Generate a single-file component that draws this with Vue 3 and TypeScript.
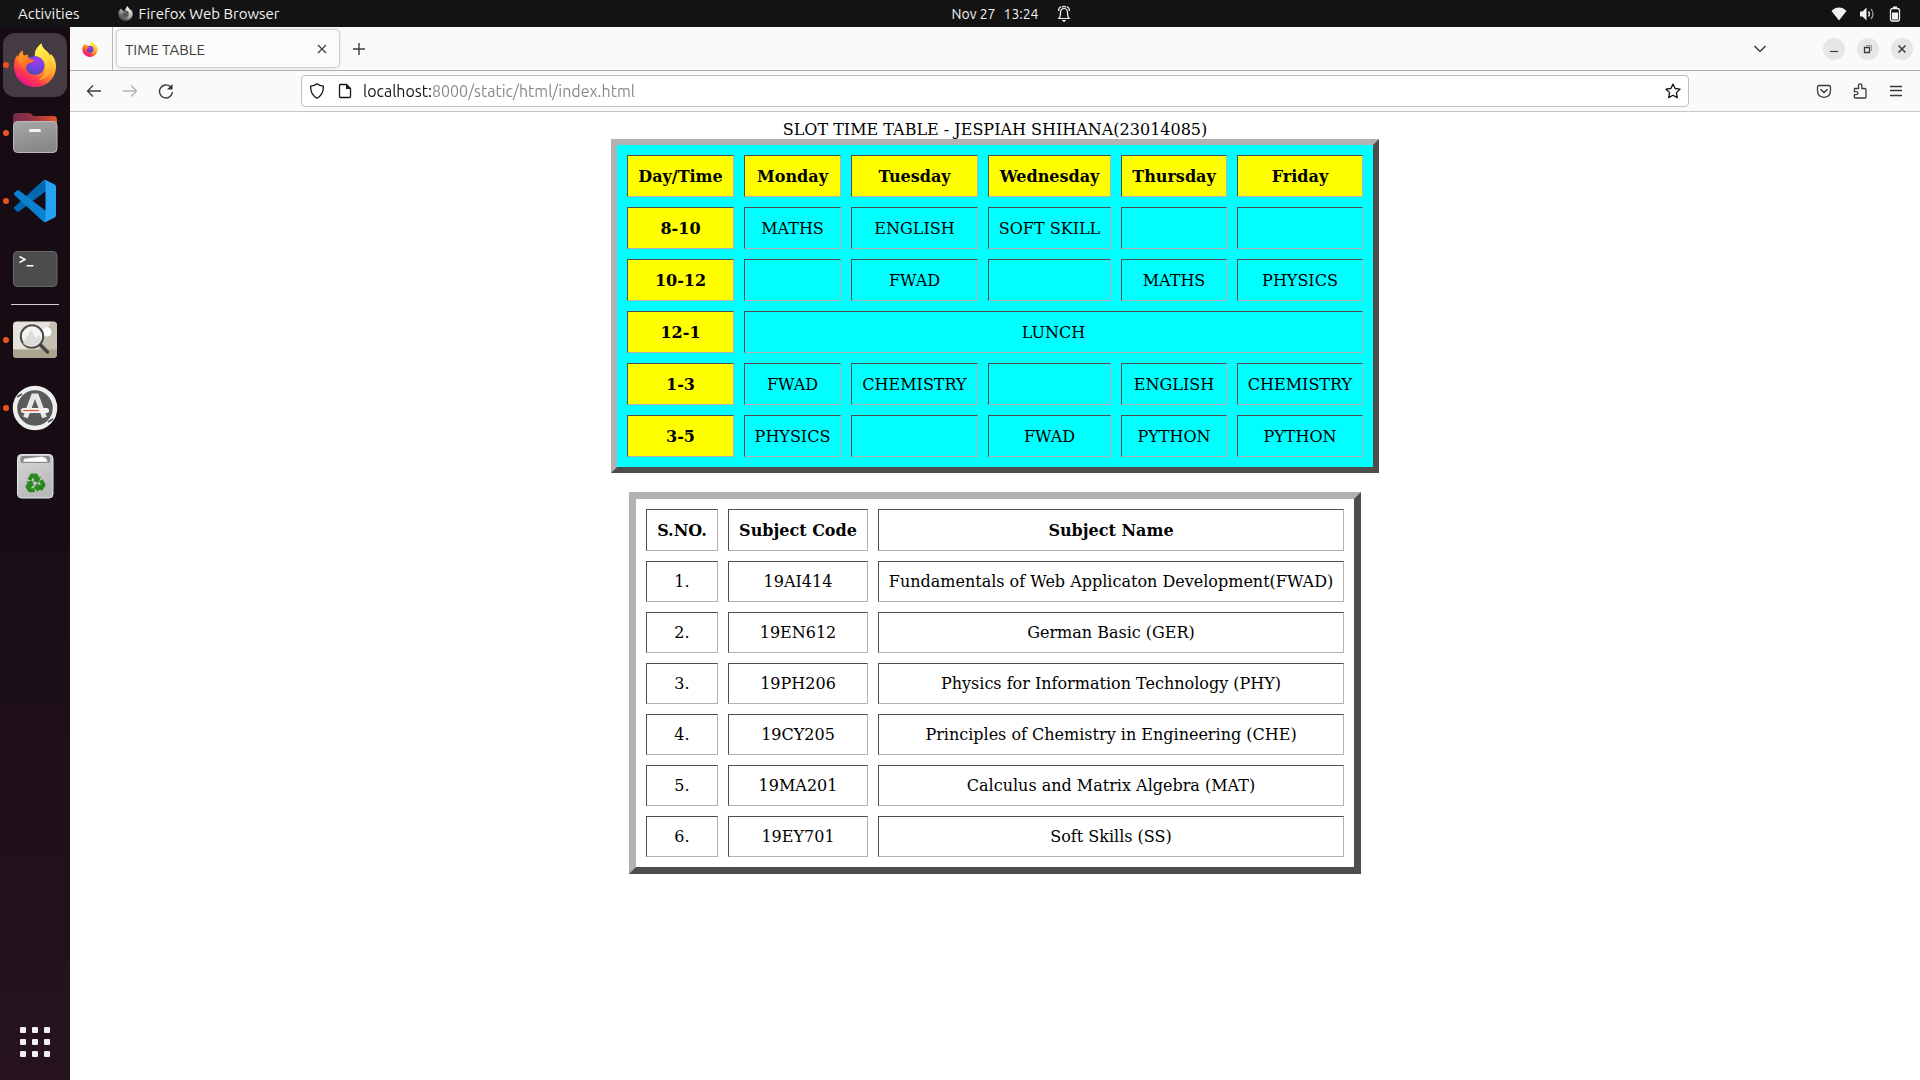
<script setup lang="ts">
import { ref } from 'vue'

interface Slot {
  text: string
  span?: number
}

interface Period {
  time: string
  slots: Slot[]
}

interface Subject {
  code: string
  name: string
}

const url = ref('localhost:8000/static/html/index.html')

const days: string[] = ['Monday', 'Tuesday', 'Wednesday', 'Thursday', 'Friday']

const week = (...names: string[]): Slot[] => names.map((text) => ({ text }))

const periods: Period[] = [
  { time: '8-10', slots: week('MATHS', 'ENGLISH', 'SOFT SKILL', '', '') },
  { time: '10-12', slots: week('', 'FWAD', '', 'MATHS', 'PHYSICS') },
  { time: '12-1', slots: [{ text: 'LUNCH', span: 5 }] },
  { time: '1-3', slots: week('FWAD', 'CHEMISTRY', '', 'ENGLISH', 'CHEMISTRY') },
  { time: '3-5', slots: week('PHYSICS', '', 'FWAD', 'PYTHON', 'PYTHON') },
]

const subjects: Subject[] = [
  { code: '19AI414', name: 'Fundamentals of Web Applicaton Development(FWAD)' },
  { code: '19EN612', name: 'German Basic (GER)' },
  { code: '19PH206', name: 'Physics for Information Technology (PHY)' },
  { code: '19CY205', name: 'Principles of Chemistry in Engineering (CHE)' },
  { code: '19MA201', name: 'Calculus and Matrix Algebra (MAT)' },
  { code: '19EY701', name: 'Soft Skills (SS)' },
]

const gridDots: number[] = [0, 12, 24]
</script>

<template>
  <div class="desktop">
    <svg class="sprite" aria-hidden="true">
      <defs>
        <linearGradient id="fx-body" x1="0.8" y1="0.1" x2="0.25" y2="0.95">
          <stop offset="0" stop-color="#fff44f" />
          <stop offset="0.3" stop-color="#ffc130" />
          <stop offset="0.55" stop-color="#ff8128" />
          <stop offset="0.78" stop-color="#ff3750" />
          <stop offset="1" stop-color="#e8128a" />
        </linearGradient>
        <linearGradient id="fx-tail" x1="0.4" y1="0" x2="0.7" y2="1">
          <stop offset="0" stop-color="#fff450" />
          <stop offset="0.5" stop-color="#ffd83a" />
          <stop offset="1" stop-color="#ff9230" />
        </linearGradient>
        <linearGradient id="fx-head" x1="0" y1="0" x2="0.4" y2="1">
          <stop offset="0" stop-color="#ffa21f" />
          <stop offset="0.5" stop-color="#ff8a1c" />
          <stop offset="1" stop-color="#ff4040" />
        </linearGradient>
        <radialGradient id="fx-globe" cx="0.6" cy="0.25" r="0.8">
          <stop offset="0" stop-color="#a43bf0" />
          <stop offset="0.5" stop-color="#7542e5" />
          <stop offset="1" stop-color="#4a4bb5" />
        </radialGradient>
        <symbol id="firefox" viewBox="0 0 42 44">
          <path fill="url(#fx-body)" d="M27.500.5C28 4 30 6 33 8.500C34.500 10 35.200 11.600 35.500 13.500L37 11C40.500 14.500 42 19 42 23C42 35 33 44 21 44S0 35 0 23C0 19 1 15 3 12L4 14.500C5 11 6.500 9 8.500 7.500C8.300 10 9 12 10 12.800L14 11.500L13.500 14.500L21 15C20 8 23 4 27.500.5Z" />
          <path fill="url(#fx-tail)" d="M27.500.5C28 4 30 6 33 8.500C37 12.500 39 17 38.500 23C38 31 32 36.500 25 37C31 33 33 26 30.500 20C28.500 16.500 24 16.500 21 14C20.500 8 23 4 27.500.5Z" />
          <circle cx="21" cy="22.500" r="9.500" fill="url(#fx-globe)" />
          <path fill="url(#fx-head)" d="M3 12L4 14.500C5 11 6.500 9 8.500 7.500C8.300 10 9 12 10 12.800L14 11.500L13.500 14.800C15 16.500 18 16.500 20.500 17.300C19 20 15.500 20 14 21C11.500 23 12 27 14 29.500C9 28 5 23 3 12Z" />
        </symbol>
      </defs>
    </svg>

    <header class="topbar">
      <div class="top-left">
        <button class="plain" type="button">Activities</button>
        <button class="plain app-menu" type="button">
          <svg class="gray-fox" width="15" height="15"><use href="#firefox" /></svg>
          <span>Firefox Web Browser</span>
        </button>
      </div>
      <button class="plain clock" type="button">
        <span>Nov 27</span>
        <span>13:24</span>
        <svg class="bell" width="14" height="18" viewBox="0 0 14 18" fill="none" stroke="#f2f2f2">
          <path d="M2 13.500C3.500 12 3.500 10 3.500 7.500C3.500 5 5 3.500 7 3.500S10.500 5 10.500 7.500C10.500 10 10.500 12 12 13.500ZM4 1.500C2.500 2.300 1.500 4 1.500 6M10 1.500C11.500 2.300 12.500 4 12.500 6M5 2.500C5.500 1 8.500 1 9 2.500" stroke-width="1.200" />
          <path d="M5.500 15.500H8.500L7 16.500Z" fill="#f2f2f2" />
        </svg>
      </button>
      <button class="plain status" type="button" aria-label="System menu">
        <svg width="16" height="16" viewBox="0 0 16 16"><path fill="#f2f2f2" d="M.5 4.500C5-.1 11-.1 15.500 4.500L8 14Z" transform="translate(0 .5)" /></svg>
        <svg width="16" height="16" viewBox="0 0 16 16" fill="none" stroke="#f2f2f2">
          <path fill="#f2f2f2" stroke="none" d="M1 5.500H3.500L7.500 1.500V14.500L3.500 10.500H1Z" />
          <path d="M9.500 5.500Q11.500 8 9.500 10.500" stroke-width="1.300" />
          <path d="M12 3Q16 8 12 13" stroke="#aaa" stroke-width="1.200" />
        </svg>
        <svg width="16" height="16" viewBox="0 0 16 16">
          <rect x="3.500" y="2.500" width="9" height="12.500" rx="2" fill="none" stroke="#f2f2f2" stroke-width="1.300" />
          <path fill="#f2f2f2" d="M6 .5H10V2H6ZM5 6.500H11V13.500H5Z" />
        </svg>
      </button>
    </header>

    <nav class="dock" aria-label="Dock">
      <button class="plain dock-item running" type="button" aria-label="Firefox">
        <span class="tile active"><svg width="42" height="44"><use href="#firefox" /></svg></span>
      </button>
      <button class="plain dock-item running" type="button" aria-label="Files">
        <svg width="48" height="48" viewBox="0 0 48 48">
          <defs>
            <linearGradient id="folder-back"><stop offset="0" stop-color="#74294f" /><stop offset="0.500" stop-color="#9b3443" /><stop offset="1" stop-color="#e95420" /></linearGradient>
            <linearGradient id="folder-front" x2="0.300" y2="1"><stop offset="0" stop-color="#a6a6a6" /><stop offset="1" stop-color="#888" /></linearGradient>
          </defs>
          <path fill="url(#folder-back)" d="M2 8Q2 4 6 4H18Q20 4 21 5.500Q22 7 24 7H42Q46 7 46 11V24H2Z" />
          <rect x="2.500" y="12.500" width="43.500" height="31" rx="4" fill="url(#folder-front)" stroke="#b9b9b9" />
          <rect x="18" y="20" width="12" height="3" rx="1.500" fill="#f4f4f4" />
        </svg>
      </button>
      <button class="plain dock-item running" type="button" aria-label="Visual Studio Code">
        <svg width="42" height="42" viewBox="0 0 100 100">
          <path fill="#0069b0" d="M96.461 10.796L75.857.876C73.472-.273 70.622.212 68.750 2.083L1.299 63.583C-.516 65.237-.514 68.094 1.303 69.745L6.813 74.754C8.298 76.104 10.535 76.204 12.134 74.991L93.361 13.370C96.086 11.303 100 13.246 100 16.667V16.428C100 14.027 98.625 11.838 96.461 10.796Z" />
          <path fill="#0a80cf" d="M96.461 89.204L75.857 99.125C73.472 100.273 70.622 99.788 68.750 97.917L1.299 36.417C-.516 34.763-.514 31.906 1.303 30.255L6.813 25.246C8.298 23.896 10.535 23.796 12.134 25.010L93.361 86.630C96.086 88.697 100 86.754 100 83.333V83.573C100 85.974 98.625 88.162 96.461 89.204Z" />
          <path fill="#25a2f2" d="M75.858 99.126C73.472 100.274 70.622 99.789 68.750 97.917C71.056 100.223 75 98.590 75 95.328V4.672C75 1.410 71.056-.223 68.750 2.083C70.622.211 73.472-.274 75.858.874L96.459 10.781C98.623 11.822 100 14.011 100 16.413V83.587C100 85.989 98.623 88.179 96.459 89.220Z" />
        </svg>
      </button>
      <button class="plain dock-item" type="button" aria-label="Terminal">
        <svg width="48" height="48" viewBox="0 0 48 48" fill="none">
          <rect x="2.500" y="6.500" width="43.500" height="35" rx="4" fill="#4c4c4c" stroke="#696969" />
          <path d="M8.500 11.500L14 14.500L8.500 17.500M15.500 20.800H22.500" stroke="#fff" stroke-width="1.500" />
        </svg>
      </button>
      <hr class="dock-rule" />
      <button class="plain dock-item running" type="button" aria-label="Image Viewer">
        <svg width="48" height="48" viewBox="0 0 48 48">
          <rect x="2" y="5.500" width="44" height="36.500" rx="4" fill="#e6e4da" />
          <path fill="#c5c1b2" d="M27 34L40 6H42Q46 6 46 10V34Z" />
          <path fill="#a9a58f" d="M2 33.500H46V38Q46 42 42 42H6Q2 42 2 38Z" />
          <circle cx="36" cy="16" r="4.500" fill="#fff" />
          <circle cx="21" cy="20.500" r="11.200" fill="#f3f3f1" stroke="#4b4b4b" stroke-width="2" />
          <path fill="#dcdcd8" d="M12 27L20 14L25 22L28 19L30 23Q27 30 21 30.500Q15 31 12 27Z" />
          <path d="M29.500 29L36.500 36" stroke="#444" stroke-width="3.500" stroke-linecap="round" />
        </svg>
      </button>
      <button class="plain dock-item running" type="button" aria-label="Software Updater">
        <svg width="48" height="48" viewBox="0 0 48 48" fill="none">
          <circle cx="24" cy="24" r="20" fill="#5b5b5b" stroke="#eee" stroke-width="4.500" />
          <path d="M6 13L11 10M37 38L42 35" stroke="#5b5b5b" stroke-width="2" />
          <path d="M14.500 33.500L22.500 12H25.500L33.500 33.500" stroke="#e8e8e8" stroke-width="5" />
          <rect x="10" y="24" width="28" height="5" rx="2.500" fill="#f2f2f2" />
          <path d="M12 26.500H28" stroke="#e95420" stroke-width="1.200" />
        </svg>
      </button>
      <button class="plain dock-item" type="button" aria-label="Trash">
        <svg width="48" height="48" viewBox="0 0 48 48">
          <defs>
            <linearGradient id="bin" x2="0.500" y2="1"><stop offset="0" stop-color="#d6d6d6" /><stop offset="1" stop-color="#b9b9b9" /></linearGradient>
            <path id="recycle-arm" d="M21 21.500H26L28.300 25.500L30 24.500L27.800 30.500L21.800 29.300L23.500 28.300L22 25.600L20 29L16.600 27L19 22.800Q19.700 21.500 21 21.500Z" />
          </defs>
          <rect x="6.500" y="2.500" width="35.500" height="43.500" rx="4" fill="url(#bin)" stroke="#e4e4e4" />
          <rect x="9.500" y="4" width="29.500" height="7" rx="2" fill="#858585" />
          <path fill="#fff" stroke="#999" stroke-width=".5" d="M12 10L13 6.500L31 4.500L35 6L37 10Z" />
          <g fill="#288a1e">
            <use href="#recycle-arm" />
            <use href="#recycle-arm" transform="rotate(120 24 31.500)" />
            <use href="#recycle-arm" transform="rotate(240 24 31.500)" />
          </g>
        </svg>
      </button>
      <button class="plain apps" type="button" aria-label="Show Applications">
        <svg width="30" height="30" viewBox="0 0 30 30" fill="#f2f0f1">
          <template v-for="y in gridDots" :key="y">
            <rect v-for="x in gridDots" :key="x" :x="x" :y="y" width="6" height="6" rx="1" />
          </template>
        </svg>
      </button>
    </nav>

    <section class="browser">
      <div class="tabs">
        <button class="plain pinned" type="button" aria-label="Firefox View">
          <svg width="16" height="16"><use href="#firefox" /></svg>
        </button>
        <div class="tab">
          <span class="tab-title">TIME TABLE</span>
          <button class="plain icon" type="button" aria-label="Close tab">
            <svg width="16" height="16" viewBox="0 0 16 16" class="line"><path d="M4 4L12 12M12 4L4 12" /></svg>
          </button>
        </div>
        <button class="plain icon new-tab" type="button" aria-label="New tab">
          <svg width="16" height="16" viewBox="0 0 16 16" class="line"><path d="M8 2V14M2 8H14" stroke-width="1.400" /></svg>
        </button>
        <button class="plain icon all-tabs" type="button" aria-label="List all tabs">
          <svg width="16" height="16" viewBox="0 0 16 16" class="line"><path d="M2.500 5L8 10.500L13.500 5" stroke-width="1.500" /></svg>
        </button>
        <div class="window-buttons">
          <button class="plain round" type="button" aria-label="Minimize">
            <svg width="16" height="16" viewBox="0 0 16 16" class="line"><path d="M4 10.500H12" /></svg>
          </button>
          <button class="plain round" type="button" aria-label="Restore">
            <svg width="16" height="16" viewBox="0 0 16 16" class="line"><path d="M4.500 6.500H9.500V11.500H4.500Z" stroke-width="1.300" /><path d="M6 4.500H11.500V10" stroke="#999" stroke-width="1" /></svg>
          </button>
          <button class="plain round" type="button" aria-label="Close">
            <svg width="16" height="16" viewBox="0 0 16 16" class="line"><path d="M4.500 4.500L11.500 11.500M11.500 4.500L4.500 11.500" stroke-width="1.500" /></svg>
          </button>
        </div>
      </div>

      <div class="toolbar">
        <div class="tool-group">
          <button class="plain icon" type="button" aria-label="Back">
            <svg width="16" height="16" viewBox="0 0 16 16" class="line"><path d="M15 8H1.500M7 2.500L1.500 8L7 13.500" stroke-width="1.300" /></svg>
          </button>
          <button class="plain icon" type="button" aria-label="Forward" disabled>
            <svg width="16" height="16" viewBox="0 0 16 16" class="line faint"><path d="M1 8H14.500M9 2.500L14.500 8L9 13.500" stroke-width="1.300" /></svg>
          </button>
          <button class="plain icon" type="button" aria-label="Reload">
            <svg width="16" height="16" viewBox="0 0 16 16" class="line"><path d="M14.500 9A6.500 6.500 0 1 1 12.500 3.700" stroke-width="1.400" /><path d="M14.500 1V6.500H9Z" fill="#333" stroke="none" /></svg>
          </button>
        </div>
        <div class="urlbar">
          <svg width="16" height="16" viewBox="0 0 16 16" class="line dark"><path d="M8 .8Q10.500 2.800 14.300 3.200Q14.800 11.500 8 15.300Q1.200 11.500 1.700 3.200Q5.500 2.800 8 .8Z" stroke-width="1.300" /></svg>
          <svg width="16" height="16" viewBox="0 0 16 16" class="line dark page-icon"><path d="M9.500 1.500H3.500Q2.500 1.500 2.500 2.500V13.500Q2.500 14.500 3.500 14.500H12.500Q13.500 14.500 13.500 13.500V5.500Z" stroke-width="1.300" /><path d="M9 1.500V6H13.500Z" fill="#15141a" stroke="none" /></svg>
          <input v-model="url" type="text" aria-label="Address" spellcheck="false" />
          <button class="plain icon" type="button" aria-label="Bookmark this page">
            <svg width="16" height="16" viewBox="0 0 16 16" class="line dark"><path d="M8 1.100L10.100 5.500L15 6.200L11.400 9.600L12.300 14.600L8 12.200L3.700 14.600L4.600 9.600L1 6.200L5.900 5.500Z" stroke-width="1.300" stroke-linejoin="round" /></svg>
          </button>
        </div>
        <div class="tool-group">
          <button class="plain icon" type="button" aria-label="Save to Pocket">
            <svg width="16" height="16" viewBox="0 0 16 16" class="line"><path d="M3 2.500H13Q14.500 2.500 14.500 4V7.500Q14.500 14 8 14.300Q1.500 14 1.500 7.500V4Q1.500 2.500 3 2.500Z" stroke-width="1.300" /><path d="M4.800 6.500L8 9.500L11.200 6.500" stroke-width="1.400" stroke-linecap="round" /></svg>
          </button>
          <button class="plain icon" type="button" aria-label="Extensions">
            <svg width="16" height="16" viewBox="0 0 16 16" class="line"><path d="M2.500 5.500H6.500V2.500Q6.500 .8 8.200 .8T9.800 2.500V5.500H12.500Q14 5.500 14 7V14Q14 15 13 15H3.500Q2.300 15 2.300 13.800V11.700H4Q6 11.700 6 10.200T4 8.700H2.300Z" stroke-width="1.300" stroke-linejoin="round" /></svg>
          </button>
          <button class="plain icon" type="button" aria-label="Open application menu">
            <svg width="16" height="16" viewBox="0 0 16 16" class="line"><path d="M2 3.500H14M2 7.500H14M2 12.500H14" stroke-width="1.400" /></svg>
          </button>
        </div>
      </div>

      <main class="page">
        <table class="schedule">
          <caption>SLOT TIME TABLE - JESPIAH SHIHANA(23014085)</caption>
          <colgroup>
            <col class="c-time" />
            <col class="c-mon" />
            <col class="c-tue" />
            <col class="c-wed" />
            <col class="c-thu" />
            <col class="c-fri" />
          </colgroup>
          <thead>
            <tr>
              <th scope="col">Day/Time</th>
              <th v-for="day in days" :key="day" scope="col">{{ day }}</th>
            </tr>
          </thead>
          <tbody>
            <tr v-for="period in periods" :key="period.time">
              <th scope="row">{{ period.time }}</th>
              <td v-for="(slot, i) in period.slots" :key="i" :colspan="slot.span">{{ slot.text }}</td>
            </tr>
          </tbody>
        </table>

        <table class="subjects">
          <colgroup>
            <col class="c-no" />
            <col class="c-code" />
            <col class="c-name" />
          </colgroup>
          <thead>
            <tr>
              <th scope="col">S.NO.</th>
              <th scope="col">Subject Code</th>
              <th scope="col">Subject Name</th>
            </tr>
          </thead>
          <tbody>
            <tr v-for="(subject, i) in subjects" :key="subject.code">
              <td>{{ i + 1 }}.</td>
              <td>{{ subject.code }}</td>
              <td>{{ subject.name }}</td>
            </tr>
          </tbody>
        </table>
      </main>
    </section>
  </div>
</template>

<style>
body {
  margin: 0;
}
</style>

<style scoped>
.desktop {
  display: grid;
  grid-template: 27px 1fr / 70px minmax(0, 1fr);
  min-height: 100vh;
  font-family: Ubuntu, "Noto Sans", sans-serif;
  font-size: 15px;
  background: #fff;
}

.sprite {
  position: absolute;
  width: 0;
  height: 0;
}

svg {
  display: block;
  flex: none;
}

.plain {
  display: flex;
  align-items: center;
  justify-content: center;
  margin: 0;
  padding: 0;
  border: 0;
  background: none;
  color: inherit;
  font: inherit;
}

/* Desktop top bar */
.topbar {
  grid-column: 1 / -1;
  display: grid;
  grid-template-columns: 1fr auto 1fr;
  align-items: center;
  background: #131313;
  color: #f2f2f2;
  line-height: 26px;
}

.top-left {
  display: flex;
  gap: 38px;
  padding-left: 18px;
}

.app-menu {
  gap: 6px;
}

.gray-fox {
  filter: grayscale(1);
}

.clock {
  gap: 8px;
  margin-left: 102px;
  font-size: 14px;
}

.bell {
  margin-left: 10px;
}

.status {
  justify-self: end;
  gap: 12px;
  padding-right: 17px;
}

/* Dock */
.dock {
  display: flex;
  flex-direction: column;
  padding: 4px 0 23px;
  background: linear-gradient(#170c14 40%, #26131f);
}

.dock-item {
  position: relative;
  height: 68px;
}

.tile {
  display: flex;
  align-items: center;
  justify-content: center;
  width: 64px;
  height: 64px;
  border-radius: 12px;
}

.tile.active {
  background: #453b42;
}

.running::before {
  content: "";
  position: absolute;
  left: 3px;
  top: 31px;
  width: 6px;
  height: 6px;
  border-radius: 50%;
  background: #e95420;
}

.dock-rule {
  width: 48px;
  height: 1px;
  margin: 1px auto;
  border: 0;
  background: #d0ced0;
}

.apps {
  margin-top: auto;
}

/* Browser chrome */
.browser {
  display: flex;
  flex-direction: column;
  min-width: 0;
}

.line {
  fill: none;
  stroke: #3c3c3c;
  stroke-width: 1.2px;
}

.dark {
  stroke: #15141a;
}

.faint {
  stroke: #b4b4b4;
}

.icon {
  width: 16px;
  height: 16px;
}

.tabs {
  display: flex;
  align-items: center;
  height: 43px;
  border-bottom: 1px solid #aeaeae;
  background: #fafafa;
}

.pinned {
  width: 43px;
  height: 43px;
  padding-right: 2px;
  border-right: 1px solid #b8b8b8;
}

.tab {
  display: flex;
  align-items: center;
  justify-content: space-between;
  box-sizing: border-box;
  width: 222px;
  height: 37px;
  margin-left: 4px;
  padding: 0 9px 0 8px;
  border-radius: 4px;
  background: #fbfbfb;
  box-shadow: 0 0 3px #888;
  color: #3c3c3c;
}

.tab-title {
  padding-top: 2px;
}

.new-tab {
  margin-left: 12px;
}

.all-tabs {
  margin-left: auto;
}

.window-buttons {
  display: flex;
  gap: 12px;
  margin: 0 7px 0 55px;
}

.round {
  width: 22px;
  height: 22px;
  border-radius: 50%;
  background: #e6e6e6;
}

.toolbar {
  display: flex;
  align-items: center;
  height: 40px;
  padding: 0 16px;
  border-bottom: 1px solid #c8c8c8;
  background: #fafafa;
}

.tool-group {
  display: flex;
  gap: 20px;
}

.urlbar {
  display: flex;
  flex: 1;
  align-items: center;
  box-sizing: border-box;
  height: 32px;
  margin: 0 127px;
  padding: 0 7px;
  border: 1px solid #bfbfbf;
  border-radius: 4px;
  background: #fff;
}

.page-icon {
  margin-left: 12px;
}

/* The host is darker than the port and path that follow it */
.urlbar input {
  flex: 1;
  min-width: 0;
  height: 24px;
  margin-left: 10px;
  padding: 0;
  border: 0;
  outline: 0;
  background: linear-gradient(90deg, #15141a 68px, #85858a 68px);
  background-clip: text;
  color: transparent;
  caret-color: #15141a;
  font: inherit;
  font-size: 16px;
}

/* Web page */
.page {
  padding: 8px;
  background: #fff;
  color: #000;
  font: 16px/19px "DejaVu Serif", serif;
}

table {
  margin: 0 auto;
  border-style: solid;
  border-color: #b2b2b2 #4d4d4d #4d4d4d #b2b2b2;
  border-collapse: separate;
  border-spacing: 10px;
  table-layout: fixed;
}

th,
td {
  box-sizing: border-box;
  padding: 10px 0;
  border: 1px solid;
  border-color: #4d4d4d #b2b2b2 #b2b2b2 #4d4d4d;
  text-align: center;
  white-space: nowrap;
}

th {
  padding-top: 11px;
}

.schedule {
  width: 768px;
  border-width: 6px;
  background: #0ff;
}

.schedule th {
  background: #ff0;
}

.subjects {
  width: 732px;
  margin-top: 19px;
  border-width: 7px;
}

.c-time {
  width: 107px;
}

.c-mon {
  width: 97px;
}

.c-tue {
  width: 127px;
}

.c-wed {
  width: 123px;
}

.c-thu {
  width: 106px;
}

.c-fri {
  width: 126px;
}

.c-no {
  width: 72px;
}

.c-code {
  width: 140px;
}

.c-name {
  width: 466px;
}
</style>
